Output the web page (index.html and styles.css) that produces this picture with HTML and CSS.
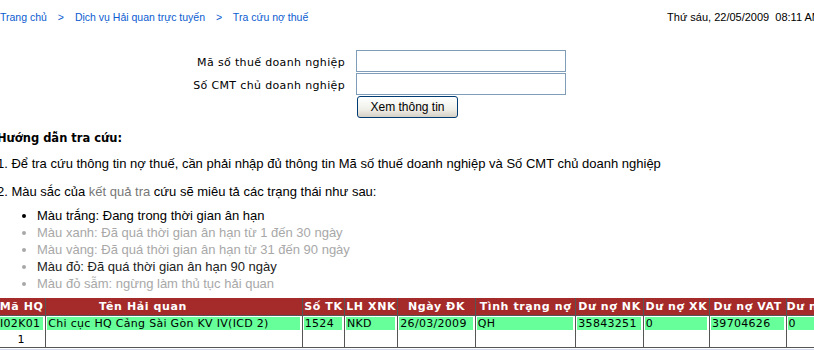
FILE: index.html
```html
<!DOCTYPE html>
<html lang="vi">
<head>
  <meta charset="UTF-8">
  <title>Tra cứu nợ thuế</title>
  <link rel="stylesheet" href="styles.css">
</head>
<body>
  <div class="page">
    <div class="topbar">
      <div class="crumbs">
        <a href="#">Trang chủ</a>
        <span class="sep">&gt;</span>
        <a href="#">Dịch vụ Hải quan trực tuyến</a>
        <span class="sep">&gt;</span>
        <a href="#">Tra cứu nợ thuế</a>
      </div>
      <div class="date">Thứ sáu, 22/05/2009&nbsp;&nbsp;08:11 AM</div>
    </div>

    <!-- form tra cứu -->
    <div class="search-form">
      <label for="mst">Mã số thuế doanh nghiệp</label>
      <input type="text" id="mst">
      <label for="cmt">Số CMT chủ doanh nghiệp</label>
      <input type="text" id="cmt">
      <span></span>
      <div><button>Xem thông tin</button></div>
    </div>

    <div class="guide">
      <div class="guide-title">Hướng dẫn tra cứu:</div>
      <p>1. Để tra cứu thông tin nợ thuế, cần phải nhập đủ thông tin Mã số thuế doanh nghiệp và Số CMT chủ doanh nghiệp</p>
      <p>2. Màu sắc của <span class="faint">kết quả tra</span> cứu sẽ miêu tả các trạng thái như sau:</p>
      <ul>
        <li>Màu trắng: Đang trong thời gian ân hạn</li>
        <li class="muted">Màu xanh: Đã quá thời gian ân hạn từ 1 đến 30 ngày</li>
        <li class="muted">Màu vàng: Đã quá thời gian ân hạn từ 31 đến 90 ngày</li>
        <li class="half">Màu đỏ: Đã quá thời gian ân hạn 90 ngày</li>
        <li class="muted">Màu đỏ sẫm: ngừng làm thủ tục hải quan</li>
      </ul>
    </div>

    <table class="result">
      <tr>
        <th class="c1">Mã HQ</th>
        <th class="c2">Tên Hải quan</th>
        <th class="c3">Số TK</th>
        <th class="c4">LH XNK</th>
        <th class="c5">Ngày ĐK</th>
        <th class="c6">Tình trạng nợ</th>
        <th class="c7">Dư nợ NK</th>
        <th class="c8">Dư nợ XK</th>
        <th class="c9">Dư nợ VAT</th>
        <th class="c10">Dư nợ TTĐB</th>
      </tr>
      <tr class="row-green">
        <td><span>I02K01</span></td>
        <td><span>Chi cục HQ Cảng Sài Gòn KV IV(ICD 2)</span></td>
        <td><span>1524</span></td>
        <td><span>NKD</span></td>
        <td><span>26/03/2009</span></td>
        <td><span>QH</span></td>
        <td><span>35843251</span></td>
        <td><span>0</span></td>
        <td><span>39704626</span></td>
        <td><span>0</span></td>
      </tr>
      <tr class="row-num">
        <td class="num">1</td>
        <td></td><td></td><td></td><td></td><td></td><td></td><td></td><td></td><td></td>
      </tr>
    </table>
    <div class="strip"></div>
  </div>
</body>
</html>
```

FILE: styles.css
```css
body {
  margin: 0;
  background-color: #fff;
  color: #000;
  font-family: "Liberation Sans", Arial, sans-serif;
  font-size: 13px;
  overflow: hidden;
}

.page {
  margin-left: -3px;
  width: 900px;
}

.topbar {
  display: flex;
  justify-content: space-between;
  padding: 11px 0 0 3px;
  height: 14px;
  font-size: 10.5px;
  width: 821px;
}

.crumbs a {
  color: #0a5bd0;
  text-decoration: none;
}

.crumbs .sep {
  color: #0a5bd0;
  margin: 0 8px;
}

.date {
  color: #000;
  font-size: 11px;
}

/* form */
.search-form {
  display: grid;
  grid-template-columns: 348px 210px;
  column-gap: 11px;
  row-gap: 1px;
  margin-top: 25px;
  font-family: "DejaVu Sans", Verdana, sans-serif;
  font-size: 11px;
}

.search-form label {
  text-align: right;
  align-self: center;
  padding-top: 2px;
  letter-spacing: 0.35px;
}

.search-form input {
  width: 210px;
  height: 22px;
  box-sizing: border-box;
  border: 1px solid #7f9db9;
  margin: 0;
  padding: 2px;
}

.search-form button {
  width: 101px;
  height: 22px;
  margin-left: 1px;
  font-family: "Liberation Sans", Arial, sans-serif;
  font-size: 12px;
  border: 1px solid #003c74;
  border-radius: 3px;
  background: linear-gradient(#ffffff, #f0f0ea 60%, #d6d0c5);
  color: #000;
  padding: 0;
}

/* hướng dẫn */
.guide {
  margin-top: 13px;
}

.guide-title {
  font-weight: bold;
  font-family: "DejaVu Sans", Verdana, sans-serif;
  font-size: 11.5px;
}

.guide p {
  margin: 11px 0 0 0;
  line-height: 16px;
}

.guide p + p {
  margin-top: 12px;
}

.faint {
  color: #777;
}

.guide ul {
  margin: 7px 0 0 0;
  padding-left: 40px;
}

.guide li {
  line-height: 17px;
}

.guide li.muted {
  color: #a8a8a8;
}

.guide li.half {
  color: #222;
}

.guide li.half::marker {
  color: #a8a8a8;
}

/* bảng kết quả */
.result {
  margin-top: 6px;
  border-collapse: collapse;
  font-family: "DejaVu Sans", Verdana, sans-serif;
  font-size: 11px;
  table-layout: fixed;
  width: 861px;
}

.result th {
  background-color: #a52a2a;
  color: #fff;
  font-weight: bold;
  height: 17px;
  padding: 0;
  border: 1px solid #555;
  border-top: none;
  white-space: nowrap;
  overflow: hidden;
  letter-spacing: 0.6px;
}

.result td {
  border-left: 1px solid #555;
  border-right: 1px solid #555;
  padding: 1px 2px 1px 1px;
  white-space: nowrap;
  overflow: hidden;
  letter-spacing: 0.3px;
}

.row-green td span {
  display: block;
  background-color: #66ff99;
  height: 13px;
  line-height: 13px;
  padding-left: 1px;
}

.row-num td {
  border-bottom: 1px solid #555;
  height: 14px;
}

.row-num td.num {
  text-align: center;
}

.c1 { width: 47px; }
.c2 { width: 254px; }
.c3 { width: 41px; }
.c4 { width: 52px; }
.c5 { width: 76px; }
.c6 { width: 99px; }
.c7 { width: 66px; }
.c8 { width: 65px; }
.c9 { width: 75px; }
.c10 { width: 70px; }

/* tiêu đề cột tên hải quan lệch trái như bản gốc */
.result th.c2 {
  width: 192px;
  padding-right: 62px;
}

.strip {
  height: 2px;
  margin-top: 1px;
  border-top: 1px solid #d4dcec;
}
```
